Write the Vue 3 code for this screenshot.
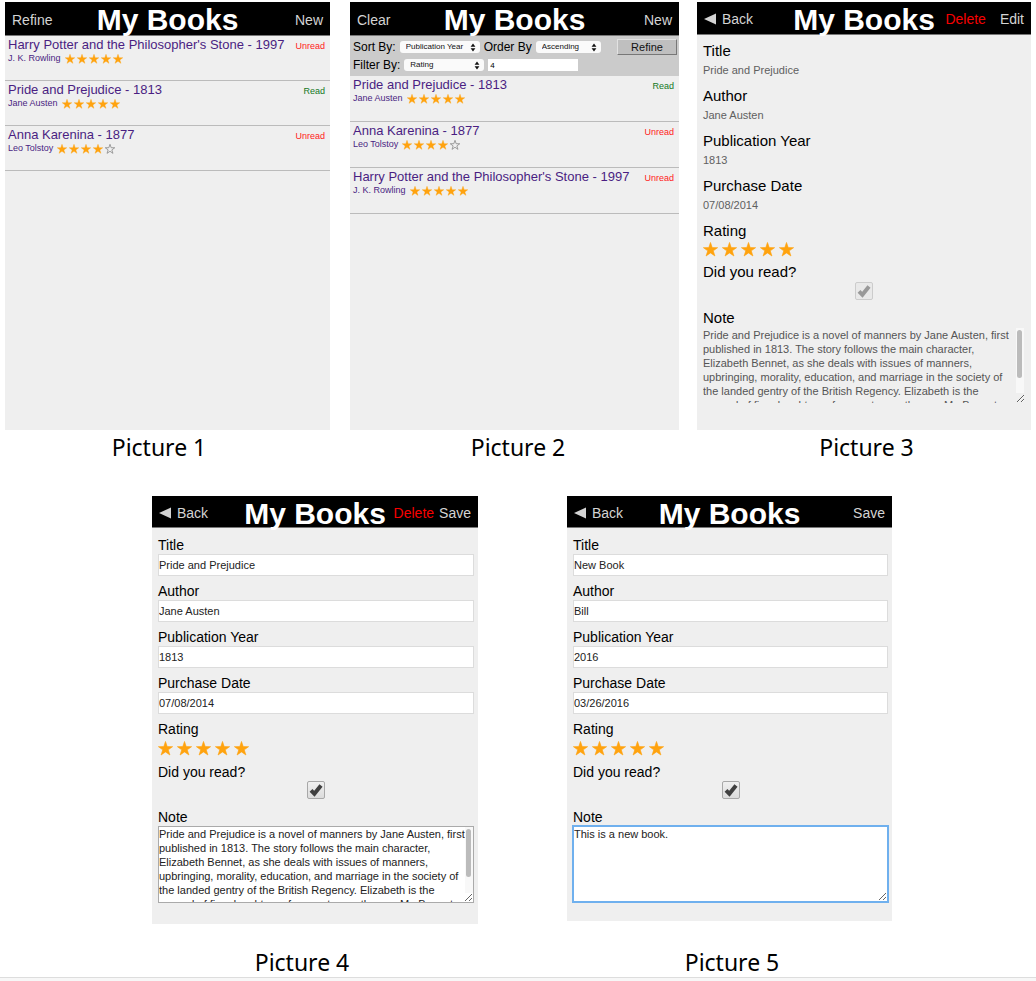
<script setup>
import { h } from 'vue'

const harry = { title: "Harry Potter and the Philosopher's Stone", year: 1997, author: 'J. K. Rowling', rating: 5, read: false }
const pride = { title: 'Pride and Prejudice', year: 1813, author: 'Jane Austen', rating: 5, read: true }
const anna = { title: 'Anna Karenina', year: 1877, author: 'Leo Tolstoy', rating: 4, read: false }

const prideNote =
  'Pride and Prejudice is a novel of manners by Jane Austen, first published in 1813. The story follows the main character, Elizabeth Bennet, as she deals with issues of manners, upbringing, morality, education, and marriage in the society of the landed gentry of the British Regency. Elizabeth is the second of five daughters of a country gentleman, Mr. Bennet, living in Longbourn.'

const lists = [
  { id: 'p1', left: 'Refine', refine: false, books: [harry, pride, anna] },
  { id: 'p2', left: 'Clear', refine: true, books: [pride, anna, harry] },
]

const prideFields = [
  { label: 'Title', value: 'Pride and Prejudice' },
  { label: 'Author', value: 'Jane Austen' },
  { label: 'Publication Year', value: '1813' },
  { label: 'Purchase Date', value: '07/08/2014' },
]

const editors = [
  { id: 'p4', canDelete: true, focused: false, fields: prideFields, note: prideNote },
  {
    id: 'p5',
    canDelete: false,
    focused: true,
    fields: [
      { label: 'Title', value: 'New Book' },
      { label: 'Author', value: 'Bill' },
      { label: 'Publication Year', value: '2016' },
      { label: 'Purchase Date', value: '03/26/2016' },
    ],
    note: 'This is a new book.',
  },
]

const starPath = 'M10 0.6 L12.3 7.4 L19.5 7.5 L13.7 11.8 L15.9 18.7 L10 14.5 L4.1 18.7 L6.3 11.8 L0.5 7.5 L7.7 7.4 Z'

const Star = (props) =>
  h('svg', { viewBox: '0 0 20 20', width: props.size, height: props.size, 'aria-hidden': 'true' }, [
    h('path', {
      d: starPath,
      fill: props.on ? '#ffa30f' : 'none',
      stroke: props.on ? '#ffa30f' : '#888',
      'stroke-width': props.on ? 0.8 : 1.6,
    }),
  ])
Star.props = ['on', 'size']

const Arrows = () =>
  h('svg', { class: 'arrows', viewBox: '0 0 6 9', width: 6, height: 9, 'aria-hidden': 'true' }, [
    h('path', { d: 'M3 0.5 L5.4 3.8 H0.6 Z M3 8.5 L5.4 5.2 H0.6 Z', fill: '#111' }),
  ])
</script>

<template>
  <main class="sheet">
    <div class="row row-top">
      <section v-for="list in lists" :key="list.id" class="screen" :class="list.id" :aria-labelledby="list.id">
        <header class="bar">
          <nav class="side"><a href="#">{{ list.left }}</a></nav>
          <h1>My Books</h1>
          <nav class="side end"><a href="#">New</a></nav>
        </header>
        <form v-if="list.refine" class="refine" @submit.prevent>
          <div class="refine-line">
            <label for="sort">Sort By:</label>
            <span class="pick wide">
              <select id="sort"><option>Publication Year</option></select>
              <Arrows />
            </span>
            <label for="order">Order By</label>
            <span class="pick">
              <select id="order"><option>Ascending</option></select>
              <Arrows />
            </span>
            <button class="apply" type="submit">Refine</button>
          </div>
          <div class="refine-line">
            <label for="filter">Filter By:</label>
            <span class="pick wide">
              <select id="filter"><option>Rating</option></select>
              <Arrows />
            </span>
            <input class="filter-value" type="text" value="4" aria-label="Filter value" />
          </div>
        </form>
        <ul class="books">
          <li v-for="book in list.books" :key="book.title">
            <a class="book" href="#">
              <span class="book-title">{{ book.title }} - {{ book.year }}</span>
              <span class="book-meta">
                {{ book.author }}
                <span class="stars small" role="img" :aria-label="book.rating + ' of 5'">
                  <Star v-for="n in 5" :key="n" :on="n <= book.rating" size="10" />
                </span>
              </span>
            </a>
            <span class="status" :class="{ read: book.read }">{{ book.read ? 'Read' : 'Unread' }}</span>
          </li>
        </ul>
      </section>

      <section class="screen p3" aria-labelledby="p3">
        <header class="bar">
          <nav class="side">
            <a class="back" href="#">
              <svg viewBox="0 0 12 12" width="12" height="12" aria-hidden="true"><path d="M0 6 L12 0.5 V11.5 Z" fill="currentColor" /></svg>
              Back
            </a>
          </nav>
          <h1>My Books</h1>
          <nav class="side end"><a class="danger" href="#">Delete</a><a href="#">Edit</a></nav>
        </header>
        <div class="details">
          <dl>
            <template v-for="field in prideFields" :key="field.label">
              <dt class="caption">{{ field.label }}</dt>
              <dd>{{ field.value }}</dd>
            </template>
          </dl>
          <p class="caption">Rating</p>
          <div class="stars big" role="img" aria-label="5 of 5">
            <Star v-for="n in 5" :key="n" :on="true" size="15" />
          </div>
          <label class="caption" for="p3-read">Did you read?</label>
          <span class="tick">
            <input id="p3-read" type="checkbox" checked disabled />
            <svg viewBox="0 0 18 18" width="18" height="18" aria-hidden="true"><path d="M4 9.4 L7.4 12.8 L14 4.6" /></svg>
          </span>
          <label class="caption" for="p3-note">Note</label>
          <span class="note">
            <textarea id="p3-note" readonly :value="prideNote"></textarea>
            <span class="track"><span class="thumb"></span></span>
          </span>
        </div>
      </section>
    </div>

    <div class="captions captions-top">
      <p id="p1">Picture 1</p>
      <p id="p2">Picture 2</p>
      <p id="p3">Picture 3</p>
    </div>

    <div class="row row-bottom">
      <section v-for="ed in editors" :key="ed.id" class="screen" :class="ed.id" :aria-labelledby="ed.id">
        <header class="bar">
          <nav class="side">
            <a class="back" href="#">
              <svg viewBox="0 0 12 12" width="12" height="12" aria-hidden="true"><path d="M0 6 L12 0.5 V11.5 Z" fill="currentColor" /></svg>
              Back
            </a>
          </nav>
          <h1>My Books</h1>
          <nav class="side end"><a v-if="ed.canDelete" class="danger" href="#">Delete</a><a href="#">Save</a></nav>
        </header>
        <form class="details edit" @submit.prevent>
          <div v-for="(field, i) in ed.fields" :key="field.label" class="field">
            <label class="caption" :for="ed.id + '-f' + i">{{ field.label }}</label>
            <input :id="ed.id + '-f' + i" type="text" :value="field.value" />
          </div>
          <p class="caption">Rating</p>
          <div class="stars big">
            <button v-for="n in 5" :key="n" type="button" :aria-label="'Rate ' + n"><Star :on="true" size="15" /></button>
          </div>
          <label class="caption" :for="ed.id + '-read'">Did you read?</label>
          <span class="tick">
            <input :id="ed.id + '-read'" type="checkbox" checked />
            <svg viewBox="0 0 18 18" width="18" height="18" aria-hidden="true"><path d="M4 9.4 L7.4 12.8 L14 4.6" /></svg>
          </span>
          <label class="caption" :for="ed.id + '-note'">Note</label>
          <span class="note" :class="{ focused: ed.focused }">
            <textarea :id="ed.id + '-note'" :value="ed.note"></textarea>
            <span v-if="!ed.focused" class="track"><span class="thumb"></span></span>
          </span>
        </form>
      </section>
    </div>

    <div class="captions captions-bottom">
      <p id="p4">Picture 4</p>
      <p id="p5">Picture 5</p>
    </div>
    <footer class="edge"></footer>
  </main>
</template>

<style>
body {
  margin: 0;
  background: #fff;
}
</style>

<style scoped>
.sheet {
  padding-top: 2px;
  font-family: 'Liberation Sans', Arial, Helvetica, sans-serif;
  color: #000;
}
.sheet :deep(*) {
  box-sizing: border-box;
}
.sheet p,
.sheet h1,
.sheet dl,
.sheet dd,
.sheet ul {
  margin: 0;
  padding: 0;
}
.sheet a {
  text-decoration: none;
}
input,
select,
textarea,
button {
  font-family: inherit;
  margin: 0;
}
.row {
  display: grid;
}
.row-top {
  grid-template-columns: 5fr 325fr 20fr 329fr 18fr 334fr 5fr;
}
.row-bottom {
  grid-template-columns: 152fr 326fr 89fr 325fr 144fr;
  align-items: start;
}
.screen {
  background: #efefef;
  min-width: 0;
}
.p1,
.p4 {
  grid-column: 2;
}
.p2,
.p5 {
  grid-column: 4;
}
.p3 {
  grid-column: 6;
}

/* Title bar */
.bar {
  display: grid;
  grid-template-columns: 1fr auto 1fr;
  align-items: center;
  height: 34px;
  padding: 3px 7px 0;
  background: #000;
  border-bottom: 1px solid #777;
}
.p3 .bar,
.p4 .bar,
.p5 .bar {
  height: 33px;
  padding-top: 1px;
}
.p4 .bar,
.p5 .bar {
  height: 32px;
}
.bar h1 {
  font-size: 30px;
  line-height: 30px;
  font-weight: bold;
  color: #fff;
}
.p3 .bar h1,
.p4 .bar h1,
.p5 .bar h1 {
  padding-top: 2px;
}
.side {
  display: flex;
  font-size: 14px;
  line-height: 18px;
}
.side.end {
  justify-content: flex-end;
  gap: 5px;
}
.p3 .side.end {
  gap: 14px;
}
.side a {
  color: #d4d4d4;
}
.side a.danger {
  color: #f80000;
}
.back {
  display: flex;
  align-items: center;
  gap: 6px;
}

/* Refine panel */
.refine {
  background: #cbcbcb;
  padding: 2px 2px 2px 3px;
}
.refine-line {
  display: flex;
  align-items: center;
  gap: 4px;
  height: 18px;
  font-size: 12px;
  line-height: 18px;
  white-space: nowrap;
}
.pick {
  position: relative;
  display: flex;
  width: 65px;
}
.pick.wide {
  width: 80px;
}
.pick select {
  appearance: none;
  width: 100%;
  height: 12px;
  padding: 0 6px;
  border: 0;
  border-radius: 3px;
  background: #fafafa;
  color: #111;
  font-size: 8px;
  line-height: 12px;
}
.pick :deep(.arrows) {
  position: absolute;
  right: 4px;
  top: 2px;
  pointer-events: none;
}
.filter-value {
  width: 90px;
  height: 12px;
  padding: 0 2px;
  border: 0;
  background: #fff;
  font-size: 8px;
}
.apply {
  width: 60px;
  height: 16px;
  margin-left: auto;
  padding: 0;
  border: 1px solid;
  border-color: #e2e2e2 #777 #777 #e2e2e2;
  background: #bfbfbf;
  color: #111;
  font-size: 11px;
  line-height: 12px;
}

/* Book list */
.books {
  list-style: none;
}
.books li {
  display: flex;
  justify-content: space-between;
  height: 45px;
  padding: 0 5px 0 3px;
  border-bottom: 1px solid #bbb;
}
.p2 .books li {
  height: 46px;
}
.book {
  color: #4a1e82;
}
.book-title {
  display: block;
  font-size: 13px;
  line-height: 17px;
  white-space: nowrap;
}
.book-meta {
  display: flex;
  align-items: center;
  gap: 4px;
  font-size: 9px;
  line-height: 11px;
}
.status {
  font-size: 9px;
  line-height: 20px;
  color: #ff1a1a;
}
.status.read {
  color: #14781e;
}
.stars {
  display: flex;
  align-items: center;
}
.stars.small {
  gap: 2px;
}
.stars.big {
  gap: 4px;
  height: 16px;
}
.stars button {
  display: flex;
  padding: 0;
  border: 0;
  background: none;
}

/* Details and edit form */
.details {
  padding: 6px 6px 27px;
}
.caption {
  display: block;
  font-size: 15px;
  line-height: 20px;
}
.details dd {
  margin-bottom: 7px;
  font-size: 11px;
  line-height: 18px;
  color: #606060;
}
.details .stars.big {
  margin-bottom: 5px;
}
.tick {
  position: relative;
  display: block;
  width: 18px;
  height: 18px;
  margin: 0 auto 9px;
}
.p3 .tick {
  margin-bottom: 8px;
}
.tick input {
  appearance: none;
  display: block;
  width: 18px;
  height: 18px;
  border: 1px solid #a8a8a8;
  border-radius: 2px;
  background: linear-gradient(#f0f0f0, #dcdcdc);
}
.tick input:disabled {
  border-color: #ccc;
  background: #e9e9e9;
}
.tick svg {
  position: absolute;
  inset: 0;
  fill: none;
  stroke: #404040;
  stroke-width: 4;
  pointer-events: none;
}
.p3 .tick svg {
  stroke: #999;
}
.note {
  position: relative;
  display: block;
}
.note textarea {
  display: block;
  width: 100%;
  height: 75px;
  padding: 0 12px 0 0;
  border: 0;
  outline: 0;
  overflow: hidden;
  resize: vertical;
  background: transparent;
  color: #555;
  font-size: 11px;
  line-height: 14px;
}
.track {
  position: absolute;
  top: 0;
  right: 1px;
  bottom: 10px;
  width: 8px;
  padding: 2px 1px;
  background: #f8f8f8;
  pointer-events: none;
}
.thumb {
  display: block;
  width: 5px;
  height: 48px;
  border-radius: 3px;
  background: #bbb;
}
.edit {
  padding: 8px 4px 21px 6px;
}
.edit .caption {
  font-size: 14px;
  line-height: 18px;
}
.field {
  margin-bottom: 6px;
}
.field input {
  display: block;
  width: 100%;
  height: 22px;
  padding: 0;
  border: 1px solid #dcdcdc;
  background: #fff;
  color: #222;
  font-size: 11px;
}
.edit .caption + .stars.big {
  margin: 2px 0 7px;
}
.edit .note textarea {
  height: 77px;
  padding: 0 4px 0 0;
  border: 1px solid #aaa;
  background: #fff;
  color: #222;
}
.edit .track {
  top: 1px;
}
.edit .note.focused textarea {
  height: 76px;
  padding: 0;
  border-color: #6fb0ee;
  box-shadow: 0 0 0 1px #6fb0ee;
}
.p5 .edit {
  padding-bottom: 19px;
}

/* Captions under the screens */
.captions {
  display: grid;
  font-family: 'Noto Sans', 'Open Sans', sans-serif;
  font-size: 23px;
  line-height: 30px;
  text-align: center;
}
.captions-top {
  grid-template-columns: 318fr 400fr 297fr 21fr;
  padding: 2px 0 34px;
}
.captions-bottom {
  grid-template-columns: 604fr 256fr 176fr;
  padding-top: 23px;
}
.edge {
  height: 4px;
  border-top: 1px solid #ddd;
  background: #f7f7f7;
}
</style>
